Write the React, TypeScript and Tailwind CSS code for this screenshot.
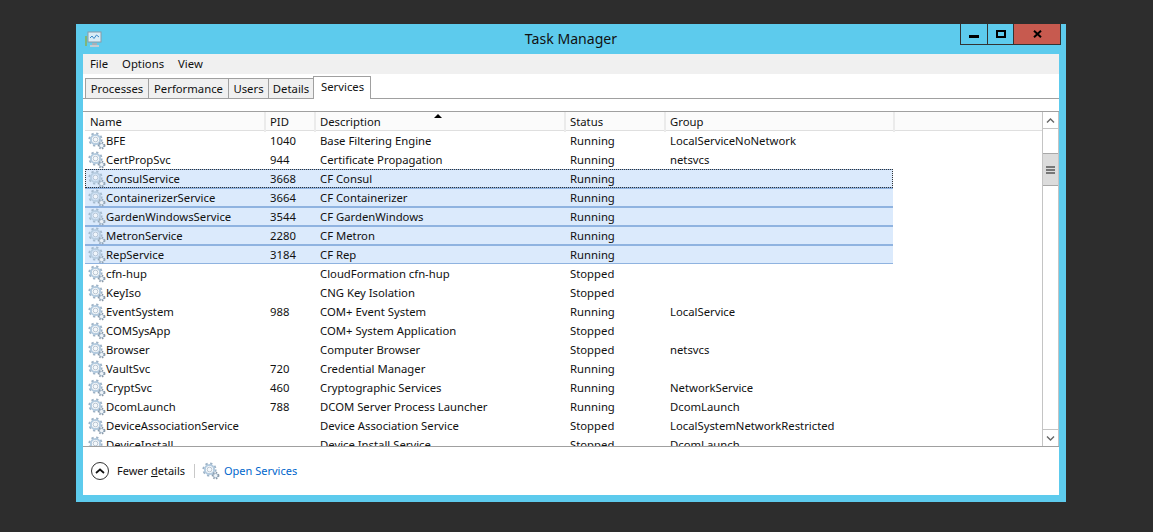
import React from "react";

type Row = [string, string, string, string, string, boolean?];
const rows: Row[] = [
  ["BFE", "1040", "Base Filtering Engine", "Running", "LocalServiceNoNetwork"],
  ["CertPropSvc", "944", "Certificate Propagation", "Running", "netsvcs"],
  ["ConsulService", "3668", "CF Consul", "Running", "", true],
  ["ContainerizerService", "3664", "CF Containerizer", "Running", "", true],
  ["GardenWindowsService", "3544", "CF GardenWindows", "Running", "", true],
  ["MetronService", "2280", "CF Metron", "Running", "", true],
  ["RepService", "3184", "CF Rep", "Running", "", true],
  ["cfn-hup", "", "CloudFormation cfn-hup", "Stopped", ""],
  ["KeyIso", "", "CNG Key Isolation", "Stopped", ""],
  ["EventSystem", "988", "COM+ Event System", "Running", "LocalService"],
  ["COMSysApp", "", "COM+ System Application", "Stopped", ""],
  ["Browser", "", "Computer Browser", "Stopped", "netsvcs"],
  ["VaultSvc", "720", "Credential Manager", "Running", ""],
  ["CryptSvc", "460", "Cryptographic Services", "Running", "NetworkService"],
  ["DcomLaunch", "788", "DCOM Server Process Launcher", "Running", "DcomLaunch"],
  ["DeviceAssociationService", "", "Device Association Service", "Stopped", "LocalSystemNetworkRestricted"],
  ["DeviceInstall", "", "Device Install Service", "Stopped", "DcomLaunch"],
];

const Gear = ({ faded = false }: { faded?: boolean }) => (
  <svg width={18} height={18} viewBox="0 0 18 18" className={`shrink-0 ${faded ? "opacity-85" : ""}`}>
    <circle cx="7.5" cy="7.5" r="6" fill="none" stroke="#9db2c6" strokeWidth="2.2" strokeDasharray="2.2 2.5" />
    <circle cx="7.5" cy="7.5" r="4.6" fill="none" stroke="#b4cbdf" strokeWidth="2" />
    <circle cx="7.5" cy="7.5" r="2.4" fill="#f4f8fb" stroke="#8ba0b4" strokeWidth="0.6" />
    <circle cx="13.6" cy="13.6" r="3" fill="none" stroke="#8a99a7" strokeWidth="1.6" strokeDasharray="1.4 1.4" />
    <circle cx="13.6" cy="13.6" r="2.2" fill="#eef3f7" stroke="#9bb0c3" strokeWidth="1" />
  </svg>
);

const cols = "grid grid-cols-[180px_50px_250px_100px_229px]";
const tabs: [string, string][] = [
  ["Processes", "w-[64px]"],
  ["Performance", "w-[81px]"],
  ["Users", "w-[41px]"],
  ["Details", "w-[46px]"],
];

export default function App() {
  return (
    <div
      className="w-[1153px] h-[532px] overflow-hidden bg-[#2d2d2d] pt-[24px] pl-[76px] text-[11.3px] leading-[18px] text-[#111]"
      style={{ fontFamily: '"Noto Sans", sans-serif' }}
    >
      <div className="w-[990px] h-[478px] bg-[#5dcbed] px-[7px] pb-[7px] flex flex-col">
        {/* Title bar */}
        <div className="h-[30px] shrink-0 flex items-start relative">
          <svg width="18" height="17" viewBox="0 0 18 17" className="mt-[7px] ml-[1px]">
            <rect x="4" y="1" width="13" height="10" fill="#d9ecf6" stroke="#8b9aa6" />
            <path d="M6 7l2-2 2 2.5 2.5-3.5 2.5 2" fill="none" stroke="#3a8ac9" strokeWidth="1" />
            <rect x="8" y="12" width="5" height="2" fill="#a6b0b8" />
            <rect x="6" y="14" width="9" height="2" fill="#c4ccd2" />
            <rect x="1" y="5" width="2" height="10" fill="#7fb77a" />
          </svg>
          <div className="absolute left-0 right-0 top-[5px] text-center text-[14.1px] leading-[20px] text-[#111]">Task Manager</div>
          <div className="absolute top-0 left-[877px] flex h-[21px] border-x border-b border-[#333]">
            <div className="w-[27px] flex justify-center items-start border-r border-[#333]">
              <div className="mt-[11px] w-[10px] h-[3px] bg-black" />
            </div>
            <div className="w-[26px] flex justify-center items-start border-r border-[#333]">
              <div className="mt-[6px] w-[10px] h-[8px] border-2 border-black" />
            </div>
            <div className="w-[46px] bg-[#c75a4f] flex justify-center items-start">
              <svg width="9" height="8" viewBox="0 0 9 8" className="mt-[6px]">
                <path d="M1 0.8L8 7.2M8 0.8L1 7.2" stroke="#000" strokeWidth="2" fill="none" />
              </svg>
            </div>
          </div>
        </div>

        <div className="flex-1 bg-white flex flex-col min-h-0">
          {/* Menu */}
          <div className="h-[20px] shrink-0 bg-[#f0f0f0] flex items-center pl-[7px] gap-[14px]">
            <span>File</span>
            <span>Options</span>
            <span>View</span>
          </div>

          {/* Tabs */}
          <div className="h-[25px] shrink-0 flex items-end pl-[2px] border-b border-[#a0a0a0]">
            {tabs.map(([t, w]) => (
              <div
                key={t}
                className={`${w} h-[20px] border-x border-t border-[#a0a0a0] bg-[#f0f0f0] flex items-center justify-center -mr-px`}
              >
                {t}
              </div>
            ))}
            <div className="w-[58px] h-[23px] -mb-px border-x border-t border-[#a0a0a0] bg-white pl-[7px] leading-[20px]">
              Services
            </div>
          </div>

          <div className="h-[12px] shrink-0" />

          {/* List area */}
          <div className="h-[336px] shrink-0 border-t border-[#a0a0a0] border-b flex pl-[2px] overflow-hidden">
            <div className="flex-1 min-w-0 flex flex-col">
              <div className={`${cols} h-[19px] shrink-0 bg-[#fbfbfb] border-b border-[#dfdfdf] relative`}>
                {["Name", "PID", "Description", "Status", "Group"].map((h) => (
                  <div key={h} className="border-r-2 -mr-px border-[#ebebeb] pl-[5px] leading-[20px]">{h}</div>
                ))}
                <div className="absolute left-[349px] top-[2px] w-0 h-0 border-x-[4px] border-x-transparent border-b-[4px] border-b-black" />
              </div>
              <div className="flex-1 overflow-hidden">
                {rows.map((r, i) => (
                  <div
                    key={r[0]}
                    className={`${cols} h-[19px] w-[808px] items-center relative ${
                      r[5] ? "bg-[#dbeafc] border-y border-[#8fb3e0]" : ""
                    } ${i === 2 ? "outline outline-1 -outline-offset-1 outline-dotted outline-[#333]" : ""}`}
                  >
                    <div className="flex items-center pl-[3px]">
                      <Gear faded={!!r[5]} />
                      <span>{r[0]}</span>
                    </div>
                    <div className="pl-[5px]">{r[1]}</div>
                    <div className="pl-[5px]">{r[2]}</div>
                    <div className="pl-[5px]">{r[3]}</div>
                    <div className="pl-[5px]">{r[4]}</div>
                  </div>
                ))}
              </div>
            </div>
            {/* Scrollbar */}
            <div className="w-[17px] shrink-0 border-x border-[#c4c4c4] flex flex-col">
              <div className="h-[17px] shrink-0 border-b border-[#c4c4c4] flex items-center justify-center">
                <svg width="9" height="5" viewBox="0 0 9 5"><path d="M1 4.5L4.5 1L8 4.5" fill="none" stroke="#666" strokeWidth="1.4" /></svg>
              </div>
              <div className="h-[24px] shrink-0" />
              <div className="h-[33px] shrink-0 bg-[#dcdcdc] border-y border-[#a8a8a8] flex flex-col items-center justify-center gap-[1px]">
                <div className="w-[9px] h-[2px] bg-[#777]" />
                <div className="w-[9px] h-[2px] bg-[#777]" />
                <div className="w-[9px] h-[2px] bg-[#777]" />
              </div>
              <div className="flex-1" />
              <div className="h-[17px] shrink-0 border-t border-[#c4c4c4] flex items-center justify-center">
                <svg width="9" height="5" viewBox="0 0 9 5"><path d="M1 0.5L4.5 4L8 0.5" fill="none" stroke="#666" strokeWidth="1.4" /></svg>
              </div>
            </div>
          </div>

          {/* Footer */}
          <div className="flex-1 flex items-center pl-[8px]">
            <div className="w-[18px] h-[18px] rounded-full border border-[#333] flex items-center justify-center">
              <svg width="10" height="6" viewBox="0 0 10 6"><path d="M1 5L5 1.5L9 5" fill="none" stroke="#111" strokeWidth="1.7" /></svg>
            </div>
            <span className="ml-[8px] text-[11px]">
              Fewer <span className="underline">d</span>etails
            </span>
            <div className="ml-[9px] w-px h-[14px] bg-[#c8c8c8]" />
            <div className="ml-[7px]"><Gear /></div>
            <span className="ml-[4px] text-[11px] text-[#0066cc]">Open Services</span>
          </div>
        </div>
      </div>
    </div>
  );
}
